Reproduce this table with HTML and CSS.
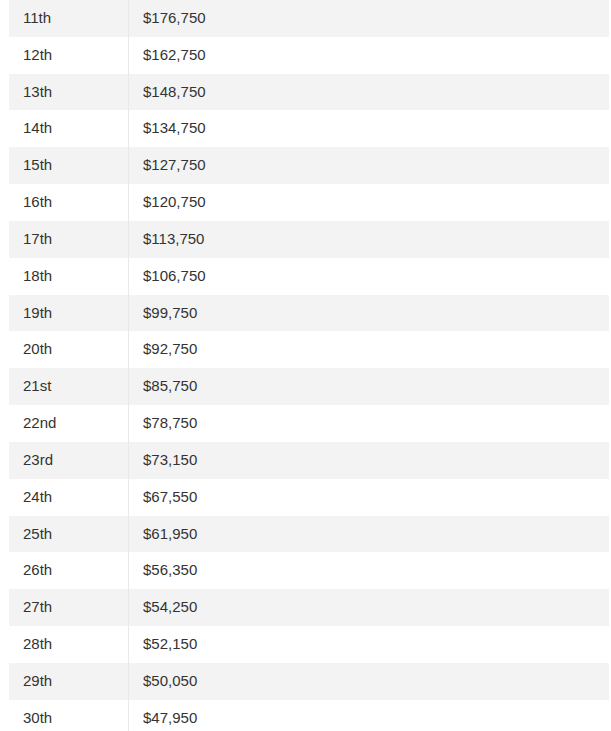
FILE: index.html
```html
<!DOCTYPE html>
<html>
<head>
<meta charset="utf-8">
<link rel="stylesheet" href="styles.css">
</head>
<body>
<div class="wrap">
<table class="prize">
<tbody>
<tr><td class="pos">11th</td><td class="amt">$176,750</td></tr>
<tr><td class="pos">12th</td><td class="amt">$162,750</td></tr>
<tr><td class="pos">13th</td><td class="amt">$148,750</td></tr>
<tr><td class="pos">14th</td><td class="amt">$134,750</td></tr>
<tr><td class="pos">15th</td><td class="amt">$127,750</td></tr>
<tr><td class="pos">16th</td><td class="amt">$120,750</td></tr>
<tr><td class="pos">17th</td><td class="amt">$113,750</td></tr>
<tr><td class="pos">18th</td><td class="amt">$106,750</td></tr>
<tr><td class="pos">19th</td><td class="amt">$99,750</td></tr>
<tr><td class="pos">20th</td><td class="amt">$92,750</td></tr>
<tr><td class="pos">21st</td><td class="amt">$85,750</td></tr>
<tr><td class="pos">22nd</td><td class="amt">$78,750</td></tr>
<tr><td class="pos">23rd</td><td class="amt">$73,150</td></tr>
<tr><td class="pos">24th</td><td class="amt">$67,550</td></tr>
<tr><td class="pos">25th</td><td class="amt">$61,950</td></tr>
<tr><td class="pos">26th</td><td class="amt">$56,350</td></tr>
<tr><td class="pos">27th</td><td class="amt">$54,250</td></tr>
<tr><td class="pos">28th</td><td class="amt">$52,150</td></tr>
<tr><td class="pos">29th</td><td class="amt">$50,050</td></tr>
<tr><td class="pos">30th</td><td class="amt">$47,950</td></tr>
</tbody>
</table>
</div>
</body>
</html>
```
FILE: styles.css
```css
html, body {
  margin: 0;
  padding: 0;
  background: #ffffff;
}
.wrap {
  padding-left: 9px;
}
.prize {
  width: 600px;
  border-collapse: collapse;
  font-family: "Liberation Sans", Arial, sans-serif;
  font-size: 15px;
  color: #333333;
}
.prize tr {
  height: 36.83px;
}
.prize tr:nth-child(odd) {
  background: #f3f3f3;
}
.prize td {
  padding: 0 14px 1px;
  vertical-align: middle;
  line-height: 18px;
}
.prize td.pos {
  width: 91px;
  border-right: 1px solid #e9e9e9;
}
.prize td.amt {
  padding-left: 14px;
}
```
